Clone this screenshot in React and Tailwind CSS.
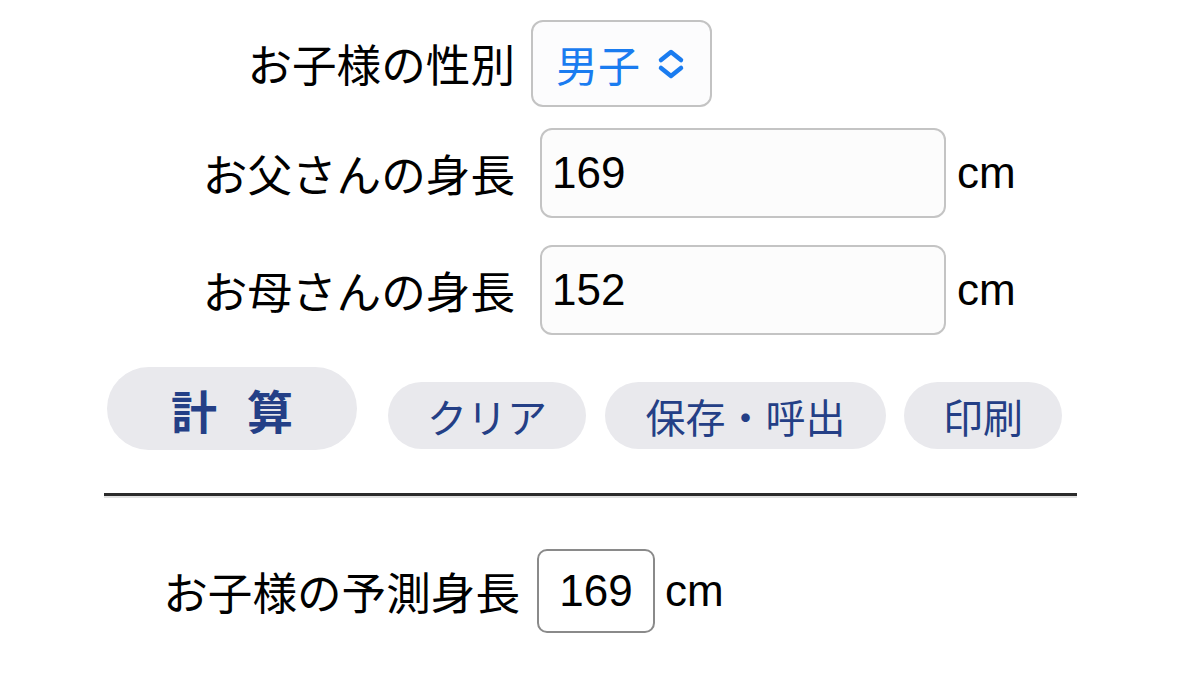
import React from 'react';

const jp = { fontFamily: '"Noto Sans CJK JP", "Noto Sans", sans-serif' };
const num = { fontFamily: '"Liberation Sans", Arial, sans-serif' };

const Label = ({ children, className = '' }) => (
    <div className={`w-[411px] shrink-0 text-right text-[44.6px] leading-none text-black ${className}`} style={jp}>
        {children}
    </div>
);

const HeightRow = ({ label, value }) => (
    <div className="flex items-center">
        <Label>{label}</Label>
        <div className="ml-[25px] flex h-[90px] w-[406px] items-center rounded-[12px] border-2 border-[#c4c4c4] bg-[#fcfcfc] pl-[10px] text-[44px] text-black" style={num}>
            {value}
        </div>
        <span className="ml-[11px] text-[44px] text-black" style={num}>cm</span>
    </div>
);

const PillButton = ({ children, className = '' }) => (
    <button className={`flex h-[67px] items-center justify-center rounded-full bg-[#e9e9ed] text-[40px] leading-none text-[#243f86] ${className}`} style={jp}>
        {children}
    </button>
);

export default function App() {
    return (
        <div className="min-h-[676px] w-full bg-white">
            <div className="ml-[104px] w-[973px] pt-[20px]">
                <div className="flex items-center">
                    <Label>お子様の性別</Label>
                    <div className="ml-[16px] flex h-[87px] w-[181px] items-center rounded-[12px] border-2 border-[#c3c3c3] bg-[#fcfcfd] pl-[23px]">
                        <span className="text-[42px] leading-none text-[#1a7cf0]" style={jp}>男子</span>
                        <svg className="ml-[16px]" width="30" height="30" viewBox="0 0 30 30" fill="none" stroke="#1a7cf0" strokeWidth="4.5" strokeLinecap="round" strokeLinejoin="round">
                            <path d="M5 11 L15 3 L25 11" />
                            <path d="M5 19 L15 27 L25 19" />
                        </svg>
                    </div>
                </div>

                <div className="mt-[21px] flex flex-col gap-[27px]">
                    <HeightRow label="お父さんの身長" value="169" />
                    <HeightRow label="お母さんの身長" value="152" />
                </div>

                <div className="mt-[32px] flex items-end">
                    <button className="ml-[3px] flex h-[83px] w-[250px] items-center justify-center gap-[30px] rounded-full bg-[#e9e9ed] text-[46px] font-bold leading-none text-[#243f86]" style={jp}>
                        <span>計</span>
                        <span>算</span>
                    </button>
                    <PillButton className="ml-[31px] mb-[1px] w-[198px]">クリア</PillButton>
                    <PillButton className="ml-[19px] mb-[1px] w-[281px]">保存・呼出</PillButton>
                    <PillButton className="ml-[18px] mb-[1px] w-[158px]">印刷</PillButton>
                </div>

                <div className="mt-[43px] border-t-[3px] border-b-2 border-t-[#2b2b2b] border-b-[#e2e2e2]" />

                <div className="mt-[51px] flex items-center">
                    <div className="w-[416px] shrink-0 text-right text-[44.6px] leading-none text-black" style={jp}>
                        お子様の予測身長
                    </div>
                    <div className="ml-[17px] flex h-[84px] w-[118px] items-center justify-center rounded-[10px] border-2 border-[#8a8a8a] bg-white text-[44px] text-black" style={num}>
                        169
                    </div>
                    <span className="ml-[10px] text-[44px] text-black" style={num}>cm</span>
                </div>
            </div>
        </div>
    );
}
